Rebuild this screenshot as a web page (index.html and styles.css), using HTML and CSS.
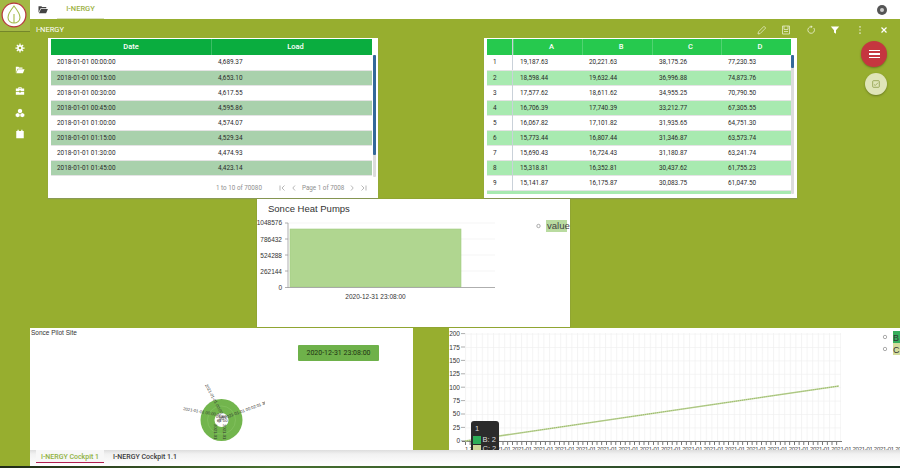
FILE: index.html
```html
<!DOCTYPE html>
<html lang="en">

<head>
    <title>I-NERGY Cockpit</title>
    <link rel="stylesheet" href="styles.css">
</head>

<body>
    <div class="app">
        <aside class="sidebar">
            <div class="logo">
                <svg width="26" height="26" viewBox="0 0 26 26">
                    <circle cx="13" cy="13" r="11.900" fill="#fff" stroke="#b5363c" stroke-width="1.200" />
                    <path d="M13 4C9 9 7 12 7 15.500C7 19 10 21 13 21C16 21 19 19 19 15.500C19 12 17 9 13 4Z" fill="none" stroke="#a3bb4c" stroke-width="1.100" />
                    <path d="M13 12V21" stroke="#a3bb4c" stroke-width="1.100" />
                </svg>
            </div>
            <nav class="side-icons">
                <svg viewBox="0 0 12 12"><circle cx="6" cy="6" r="2.500" fill="none" stroke="#fff" stroke-width="2" /><path d="M6 .5V3M6 9v2.500M.5 6H3M9 6h2.500M2.200 2.200l1.500 1.500M8.300 8.300l1.500 1.500M2.200 9.800l1.500-1.500M8.300 3.700l1.500-1.500" stroke="#fff" stroke-width="1.500" /></svg>
                <svg viewBox="0 0 12 12"><path d="M1 2h3l1 1h4v1.500H3L1 9.500ZM3.500 5.200H11.500L9.500 10H1.500Z" fill="#fff" /></svg>
                <svg viewBox="0 0 12 12"><path d="M4 3V1.500H8V3H11V6H7V5.500H5V6H1V3ZM5 3H7V2.500H5ZM1 7H5V7.800H7V7H11V10.500H1Z" fill="#fff" /></svg>
                <svg viewBox="0 0 12 12"><path d="M6 1L8.500 2.200V5L6 6.200L3.500 5V2.200ZM3.300 6L5.600 7.200V10L3.300 11.200L.8 10V7.200ZM8.700 6L11.200 7.200V10L8.700 11.200L6.400 10V7.200Z" fill="#fff" /></svg>
                <svg viewBox="0 0 12 12"><path d="M3 1H4.500V2.500H7.500V1H9V2.500H10.500V11H1.500V2.500H3Z" fill="#fff" /></svg>
            </nav>
        </aside>

        <div class="main">
            <header class="topbar">
                <svg class="top-folder" width="10" height="9" viewBox="0 0 12 11"><path d="M.5 1.500H4L5 2.500H10V4H3L.5 9.500ZM3.500 4.800H12L9.800 10H1Z" fill="#444" /></svg>
                <div class="top-tab">I-NERGY</div>
                <div class="top-close"><span></span></div>
            </header>

            <div class="panel-bar">
                <span class="panel-title">I-NERGY</span>
                <div class="panel-tools">
                    <svg viewBox="0 0 10 10"><path d="M1 9L1.500 6.800L7 1.300L8.700 3L3.200 8.500Z" fill="none" stroke="#e4ebc4" stroke-width=".8" /></svg>
                    <svg viewBox="0 0 10 10"><path d="M1.500 1H8.500V9H1.500ZM3 1V4.500H7V1M3 6.500H7" fill="none" stroke="#dfe7bb" stroke-width=".9" /></svg>
                    <svg viewBox="0 0 10 10"><path d="M7.800 3A3.300 3.300 0 1 1 5 1.700" fill="none" stroke="#e4ebc4" stroke-width=".9" /><path d="M4.800 .3V3.200L6.700 1.700Z" fill="#e4ebc4" /></svg>
                    <svg viewBox="0 0 10 10"><path d="M.8 1.500H9.200L6 5.200V8.700L4 7.500V5.200Z" fill="#fff" /></svg>
                    <svg viewBox="0 0 10 10"><path d="M5 1.200V2.400M5 4.400V5.600M5 7.600V8.800" stroke="#fff" stroke-width="1.200" /></svg>
                    <svg viewBox="0 0 10 10"><path d="M2.500 2.500L7.500 7.500M7.500 2.500L2.500 7.500" stroke="#fff" stroke-width="1.200" /></svg>
                </div>
            </div>

            <main class="canvas">
                <section class="widget table-load">
                    <div class="grid-head load-cols">
                        <div>Date</div>
                        <div>Load</div>
                    </div>
                    <div class="grid-body">
                        <div class="grid-row load-cols"><div>2018-01-01 00:00:00</div><div>4,689.37</div></div>
                        <div class="grid-row load-cols"><div>2018-01-01 00:15:00</div><div>4,653.10</div></div>
                        <div class="grid-row load-cols"><div>2018-01-01 00:30:00</div><div>4,617.55</div></div>
                        <div class="grid-row load-cols"><div>2018-01-01 00:45:00</div><div>4,595.86</div></div>
                        <div class="grid-row load-cols"><div>2018-01-01 01:00:00</div><div>4,574.07</div></div>
                        <div class="grid-row load-cols"><div>2018-01-01 01:15:00</div><div>4,529.34</div></div>
                        <div class="grid-row load-cols"><div>2018-01-01 01:30:00</div><div>4,474.93</div></div>
                        <div class="grid-row load-cols"><div>2018-01-01 01:45:00</div><div>4,423.14</div></div>
                        <div class="scroll"><div class="thumb thumb-long"></div></div>
                    </div>
                    <div class="pager">
                        <span>1 to 10 of 70080</span>
                        <span class="pager-nav">
                            <svg width="7" height="6" viewBox="0 0 7 6"><path d="M1 .5V5.500M5.500 .5L3 3L5.500 5.500" fill="none" stroke="#999" stroke-width=".7" /></svg>
                            <svg width="4" height="6" viewBox="0 0 4 6"><path d="M3 .5L.8 3L3 5.500" fill="none" stroke="#999" stroke-width=".7" /></svg>
                            <span>Page 1 of 7008</span>
                            <svg width="4" height="6" viewBox="0 0 4 6"><path d="M1 .5L3.200 3L1 5.500" fill="none" stroke="#999" stroke-width=".7" /></svg>
                            <svg width="7" height="6" viewBox="0 0 7 6"><path d="M1.500 .5L4 3L1.500 5.500M6 .5V5.500" fill="none" stroke="#999" stroke-width=".7" /></svg>
                        </span>
                    </div>
                </section>

                <section class="widget table-abcd">
                    <div class="grid-head abcd-cols">
                        <div></div>
                        <div>A</div>
                        <div>B</div>
                        <div>C</div>
                        <div>D</div>
                    </div>
                    <div class="grid-body">
                        <div class="grid-row abcd-cols"><div>1</div><div>19,187.63</div><div>20,221.63</div><div>38,175.26</div><div>77,230.53</div></div>
                        <div class="grid-row abcd-cols"><div>2</div><div>18,598.44</div><div>19,632.44</div><div>36,996.88</div><div>74,873.76</div></div>
                        <div class="grid-row abcd-cols"><div>3</div><div>17,577.62</div><div>18,611.62</div><div>34,955.25</div><div>70,790.50</div></div>
                        <div class="grid-row abcd-cols"><div>4</div><div>16,706.39</div><div>17,740.39</div><div>33,212.77</div><div>67,305.55</div></div>
                        <div class="grid-row abcd-cols"><div>5</div><div>16,067.82</div><div>17,101.82</div><div>31,935.65</div><div>64,751.30</div></div>
                        <div class="grid-row abcd-cols"><div>6</div><div>15,773.44</div><div>16,807.44</div><div>31,346.87</div><div>63,573.74</div></div>
                        <div class="grid-row abcd-cols"><div>7</div><div>15,690.43</div><div>16,724.43</div><div>31,180.87</div><div>63,241.74</div></div>
                        <div class="grid-row abcd-cols"><div>8</div><div>15,318.81</div><div>16,352.81</div><div>30,437.62</div><div>61,755.23</div></div>
                        <div class="grid-row abcd-cols"><div>9</div><div>15,141.87</div><div>16,175.87</div><div>30,083.75</div><div>61,047.50</div></div>
                        <div class="grid-row abcd-cols"></div>
                        <div class="scroll"><div class="thumb thumb-short"></div></div>
                    </div>
                </section>

                <section class="widget chart-bar">
                    <svg width="313" height="128" viewBox="0 0 313 128">
                        <text x="11" y="13" class="bar-title">Sonce Heat Pumps</text>
                        <g stroke="#f0f0f0" stroke-width=".7">
                            <line x1="31" y1="24" x2="238" y2="24" />
                            <line x1="31" y1="40" x2="238" y2="40" />
                            <line x1="31" y1="56" x2="238" y2="56" />
                            <line x1="31" y1="72" x2="238" y2="72" />
                        </g>
                        <rect x="33" y="30" width="171" height="58" fill="#b0d690" stroke="#a2cb80" stroke-width=".6" />
                        <g stroke="#999" stroke-width=".8">
                            <line x1="31" y1="24" x2="31" y2="89" />
                            <line x1="28" y1="88.500" x2="238" y2="88.500" />
                            <line x1="28" y1="24" x2="31" y2="24" />
                            <line x1="28" y1="40" x2="31" y2="40" />
                            <line x1="28" y1="56" x2="31" y2="56" />
                            <line x1="28" y1="72" x2="31" y2="72" />
                        </g>
                        <g class="bar-axis" text-anchor="end">
                            <text x="25" y="26">1048576</text>
                            <text x="25" y="42.500">786432</text>
                            <text x="25" y="58.500">524288</text>
                            <text x="25" y="74.500">262144</text>
                            <text x="25" y="90.500">0</text>
                        </g>
                        <text x="118.500" y="100" class="bar-axis" text-anchor="middle">2020-12-31 23:08:00</text>
                        <circle cx="281.500" cy="27" r="1.700" fill="#fff" stroke="#777" stroke-width=".6" />
                        <rect x="289" y="21" width="21" height="12" fill="#b9dba0" />
                        <text x="290" y="30" class="bar-legend">value</text>
                    </svg>
                </section>

                <section class="widget map">
                    <div class="map-title">Sonce Pilot Site</div>
                    <div class="map-date">2020-12-31 23:08:00</div>
                    <svg class="map-rose" width="90" height="67" viewBox="0 0 90 67">
                        <circle cx="46.500" cy="37" r="21" fill="#72b54d" />
                        <circle cx="46.500" cy="37" r="14" fill="none" stroke="#8cc66b" stroke-width=".5" />
                        <circle cx="46.500" cy="37" r="7" fill="#fff" />
                        <g class="rose-text">
                            <text transform="translate(8 27) rotate(10)">2021-01-01 00:00</text>
                            <text transform="translate(30 2) rotate(62)">2021-01-01 00:00</text>
                            <text transform="translate(50 36) rotate(-20)">2021-01-01 00:02:01 36%</text>
                            <text transform="translate(39 41) rotate(90)">2021-01</text>
                            <text transform="translate(48 41) rotate(90)">2021-01</text>
                            <text transform="translate(41 32) rotate(35)">2021</text>
                            <text transform="translate(44 40) rotate(-50)">36%</text>
                            <text x="41" y="35">01 00</text>
                            <text x="42" y="39">01 00</text>
                        </g>
                    </svg>
                </section>

                <section class="widget chart-line">
                    <svg width="451" height="122" viewBox="0 0 451 122">
                        <defs>
                            <pattern id="fine-grid" width="5.600" height="13.400" patternUnits="userSpaceOnUse" x="16" y="5.600">
                                <path d="M.5 0V13.400M0 .5H5.600" fill="none" stroke="#ededed" stroke-width=".6" />
                            </pattern>
                        </defs>
                        <rect x="16" y="5" width="376" height="108" fill="url(#fine-grid)" />
                        <g class="line-axis" text-anchor="end">
                            <text x="11" y="8">200</text>
                            <text x="11" y="21.500">175</text>
                            <text x="11" y="35">150</text>
                            <text x="11" y="48">125</text>
                            <text x="11" y="61.500">100</text>
                            <text x="11" y="75">75</text>
                            <text x="11" y="88">50</text>
                            <text x="11" y="101.500">25</text>
                            <text x="11" y="115">0</text>
                        </g>
                        <path d="M12 5.600H16M12 19H16M12 32.400H16M12 45.800H16M12 59.200H16M12 72.600H16M12 86H16M12 99.400H16M12 112.800H16" stroke="#777" stroke-width=".6" />
                        <line x1="13" y1="113.500" x2="393" y2="113.500" stroke="#555" stroke-width=".8" />
                        <line x1="16" y1="115.500" x2="392" y2="115.500" stroke="#555" stroke-width="3" stroke-dasharray=".8 3.900" />
                        <line x1="16" y1="113" x2="390" y2="58" stroke="#bcd795" stroke-width="1.500" />
                        <line x1="16" y1="113" x2="390" y2="58" stroke="#7d8f4a" stroke-width=".5" stroke-dasharray="1 1" />
                        <text x="16" y="122.500" class="line-ticks">1 2021-01 2021-01 2021-01 2021-01 2021-01 2021-01 2021-01 2021-01 2021-01 2021-01 2021-01 2021-01 2021-01 2021-01 2021-01 2021-01 2021-01 2021-01 2021-01 2021-01 2021-01 2021-01 2021-01</text>
                        <circle cx="436" cy="9" r="1.700" fill="#fff" stroke="#777" stroke-width=".6" />
                        <circle cx="436" cy="21" r="1.700" fill="#fff" stroke="#777" stroke-width=".6" />
                        <rect x="444" y="3" width="7" height="12" fill="#36ae5c" />
                        <rect x="444" y="15" width="7" height="12" fill="#d3dc9b" />
                        <text x="444" y="12.500" class="line-legend">B</text>
                        <text x="444" y="24.500" class="line-legend">C</text>
                    </svg>
                    <div class="tip">
                        <div class="tip-title">1</div>
                        <div class="tip-row"><span class="tip-swatch tip-b"></span>B: 2</div>
                        <div class="tip-row"><span class="tip-swatch tip-c"></span>C: 2</div>
                    </div>
                </section>
            </main>

            <footer class="tabs">
                <div class="tab tab-active">I-NERGY Cockpit 1</div>
                <div class="tab">I-NERGY Cockpit 1.1</div>
            </footer>
        </div>
    </div>

    <div class="screen-edge"></div>

    <div class="fab fab-red"><span></span><span></span><span></span></div>
    <div class="fab fab-light">
        <svg width="8" height="8" viewBox="0 0 8 8"><rect x=".7" y=".7" width="6.600" height="6.600" rx=".8" fill="none" stroke="#8a9a45" stroke-width=".8" /><path d="M2 4.500L3.300 5.500L6 2.700" fill="none" stroke="#8a9a45" stroke-width=".7" /></svg>
    </div>
</body>

</html>
```

FILE: styles.css
```css
* {
    box-sizing: border-box;
    margin: 0;
    padding: 0;
}

html,
body {
    width: 900px;
    height: 468px;
    overflow: hidden;
}

body {
    background-color: #97ae2f;
    font-family: Roboto, sans-serif;
    display: flex;
    flex-direction: column;
    color: #222;
}

.app {
    flex: 1;
    display: flex;
    min-height: 0;
}

.screen-edge {
    height: 2px;
    background: linear-gradient(90deg, #1f2a17, #47702f 30%, #2f4f2a 70%, #17301f);
}

/* left rail */

.sidebar {
    width: 30px;
    flex-shrink: 0;
}

.logo {
    height: 32px;
    padding: 2px 0 0 1px;
    background-color: #a3b845;
    border-bottom: 1px solid #74862a;
}

.logo svg {
    display: block;
}

.side-icons {
    display: flex;
    flex-direction: column;
    align-items: center;
    gap: 11.600px;
    padding: 11px 0 0 9px;
}

.side-icons svg {
    width: 10px;
    height: 10px;
    display: block;
}

/* top */

.main {
    flex: 1;
    min-width: 0;
    display: flex;
    flex-direction: column;
}

.topbar {
    height: 19px;
    background-color: #fff;
    display: flex;
    align-items: center;
    flex-shrink: 0;
}

.top-folder {
    margin-left: 8px;
}

.top-tab {
    margin-left: 9px;
    width: 47px;
    height: 19px;
    line-height: 18px;
    text-align: center;
    font-size: 7.500px;
    font-weight: 500;
    color: #9cb13f;
    border-bottom: 1px solid #d9dfbd;
}

.top-close {
    margin-left: auto;
    margin-right: 13px;
    width: 10px;
    height: 10px;
    border-radius: 50%;
    background-color: #555;
    display: flex;
    align-items: center;
    justify-content: center;
}

.top-close span {
    width: 4px;
    height: 4px;
    border-radius: 50%;
    background-color: #ccc;
}

.panel-bar {
    height: 19px;
    display: flex;
    align-items: center;
    justify-content: space-between;
    padding: 2px 11px 0 6px;
    flex-shrink: 0;
}

.panel-title {
    color: #fff;
    font-size: 7.500px;
}

.panel-tools {
    display: flex;
    gap: 14.400px;
}

.panel-tools svg {
    width: 10px;
    height: 10px;
    display: block;
}

/* free canvas of widgets */

.canvas {
    flex: 1;
    position: relative;
    min-height: 0;
}

.widget {
    position: absolute;
    background-color: #fff;
    overflow: hidden;
}

.table-load {
    left: 18px;
    top: 0;
    width: 330px;
    height: 160px;
    padding: 1px 0 0 3px;
    box-shadow: 0 1px 1px #8a9a55;
}

.table-abcd {
    left: 454px;
    top: 0;
    width: 313px;
    height: 160px;
    padding: 1px 0 0 3px;
    box-shadow: 0 1px 1px #8a9a55;
}

.chart-bar {
    left: 227px;
    top: 161px;
    width: 313px;
    height: 128px;
    box-shadow: 0 0 1px #6f7f45;
}

.map {
    left: 0;
    top: 290px;
    width: 383px;
    height: 122px;
}

.chart-line {
    left: 419px;
    top: 290px;
    width: 451px;
    height: 122px;
}

/* tables */

.grid-head {
    height: 16px;
    color: #fff;
    font-size: 7.500px;
    font-weight: 500;
    line-height: 16px;
    text-align: center;
}

.table-load .grid-head {
    width: 321px;
    background-color: #0aad3f;
}

.table-abcd .grid-head {
    width: 304px;
    background-color: #26c94e;
}

.grid-head > div + div {
    border-left: 1px solid rgba(255, 255, 255, 0.2);
}

.load-cols {
    display: grid;
    grid-template-columns: 160px 161px;
}

.abcd-cols {
    display: grid;
    grid-template-columns: 26px 69px 70px 69px 70px;
}

.grid-body {
    position: relative;
}

.table-load .grid-body {
    height: 123px;
}

.table-abcd .grid-body {
    height: 139px;
    overflow: hidden;
}

.grid-row {
    height: 15px;
    font-size: 6.400px;
    line-height: 15px;
    color: #2a2a2a;
    border-bottom: 1px solid #e4e4e4;
}

.grid-row:first-child {
    height: 16px;
}

.table-load .grid-row {
    width: 321px;
}

.table-abcd .grid-row {
    width: 304px;
}

.grid-row > div {
    padding-left: 6px;
}

.load-cols > div + div {
    padding-left: 7px;
}

.abcd-cols > div + div {
    padding-left: 7px;
}

.abcd-cols > div:first-child {
    border-right: 1px solid #c9d1d9;
    padding-left: 6px;
}

.table-load .grid-row:nth-child(even) {
    background-color: #a9d1ac;
}

.table-abcd .grid-row:nth-child(even) {
    background-color: #a8eab0;
}

.scroll {
    position: absolute;
    top: 0;
    background-color: #dcdcdc;
    width: 3px;
    border-radius: 1px;
}

.table-load .scroll {
    left: 322px;
    height: 122px;
}

.table-abcd .scroll {
    left: 304px;
    height: 139px;
}

.thumb {
    background-color: #33689a;
    border-radius: 1px;
}

.thumb-long {
    height: 100px;
}

.thumb-short {
    height: 13px;
}

.pager {
    display: flex;
    align-items: center;
    height: 20px;
    padding-left: 165px;
    font-size: 6.300px;
    color: #8f8f8f;
}

.pager-nav {
    display: flex;
    align-items: center;
    gap: 6px;
    margin-left: 17px;
}

/* bar chart */

.bar-title {
    font-family: "Liberation Sans", sans-serif;
    font-size: 9.500px;
    fill: #333;
}

.bar-axis {
    font-family: "Liberation Sans", sans-serif;
    font-size: 6.500px;
    fill: #333;
}

.bar-legend {
    font-family: "Liberation Sans", sans-serif;
    font-size: 9.500px;
    fill: #444;
}

/* map */

.map-title {
    padding: 1px 0 0 1px;
    font-family: "Liberation Sans", sans-serif;
    font-size: 6.500px;
    color: #333;
}

.map-date {
    position: absolute;
    left: 268px;
    top: 17px;
    width: 81px;
    height: 16px;
    line-height: 16px;
    text-align: center;
    border-radius: 1px;
    background-color: #6eb14a;
    font-size: 7px;
    color: #1e3312;
}

.map-rose {
    position: absolute;
    left: 145px;
    top: 55px;
}

.rose-text text {
    font-family: "Liberation Sans", sans-serif;
    font-size: 4.200px;
    fill: #333;
}

/* line chart */

.line-axis text {
    font-family: "Liberation Sans", sans-serif;
    font-size: 6.500px;
    fill: #333;
}

.line-ticks {
    font-family: "Liberation Sans", sans-serif;
    font-size: 6px;
    letter-spacing: -0.3px;
    fill: #444;
}

.line-legend {
    font-family: "Liberation Sans", sans-serif;
    font-size: 9px;
    fill: #333;
}

.tip {
    position: absolute;
    left: 22px;
    top: 93px;
    width: 28px;
    height: 40px;
    padding: 3px 2px;
    border-radius: 3px;
    background-color: #2b2b2b;
    font-family: "Liberation Sans", sans-serif;
    font-size: 7.500px;
    color: #ddd;
}

.tip-title {
    height: 11px;
    padding-left: 2px;
}

.tip-row {
    display: flex;
    align-items: center;
    gap: 2px;
    height: 9px;
}

.tip-swatch {
    width: 7.500px;
    height: 8px;
    flex-shrink: 0;
}

.tip-b {
    background-color: #2eae58;
}

.tip-c {
    background-color: #cfd79a;
}

/* bottom tabs */

.tabs {
    position: relative;
    height: 16px;
    flex-shrink: 0;
    display: flex;
    padding-left: 6px;
    background: linear-gradient(#ddd, #f1f1f1 25%, #fff);
    font-size: 7px;
    font-weight: 500;
    line-height: 14px;
    color: #3a3a3a;
}

.tab {
    padding: 0 8px;
}

.tab-active {
    width: 68px;
    padding: 0;
    height: 13px;
    text-align: center;
    color: #8fb13d;
    background-color: #f7f7f7;
    border-bottom: 1px solid #b01e4f;
    margin-right: 1px;
}

/* floating buttons */

.fab {
    position: absolute;
    border-radius: 50%;
    display: flex;
    flex-direction: column;
    align-items: center;
    justify-content: center;
    box-shadow: 0 1px 2px rgba(60, 70, 20, 0.5);
}

.fab-red {
    left: 861px;
    top: 41px;
    width: 26px;
    height: 26px;
    gap: 2px;
    background-color: #c5363f;
}

.fab-red span {
    width: 11px;
    height: 1.500px;
    background-color: #fff;
}

.fab-light {
    left: 865px;
    top: 73px;
    width: 22px;
    height: 22px;
    background-color: #dfe5b8;
}
```
